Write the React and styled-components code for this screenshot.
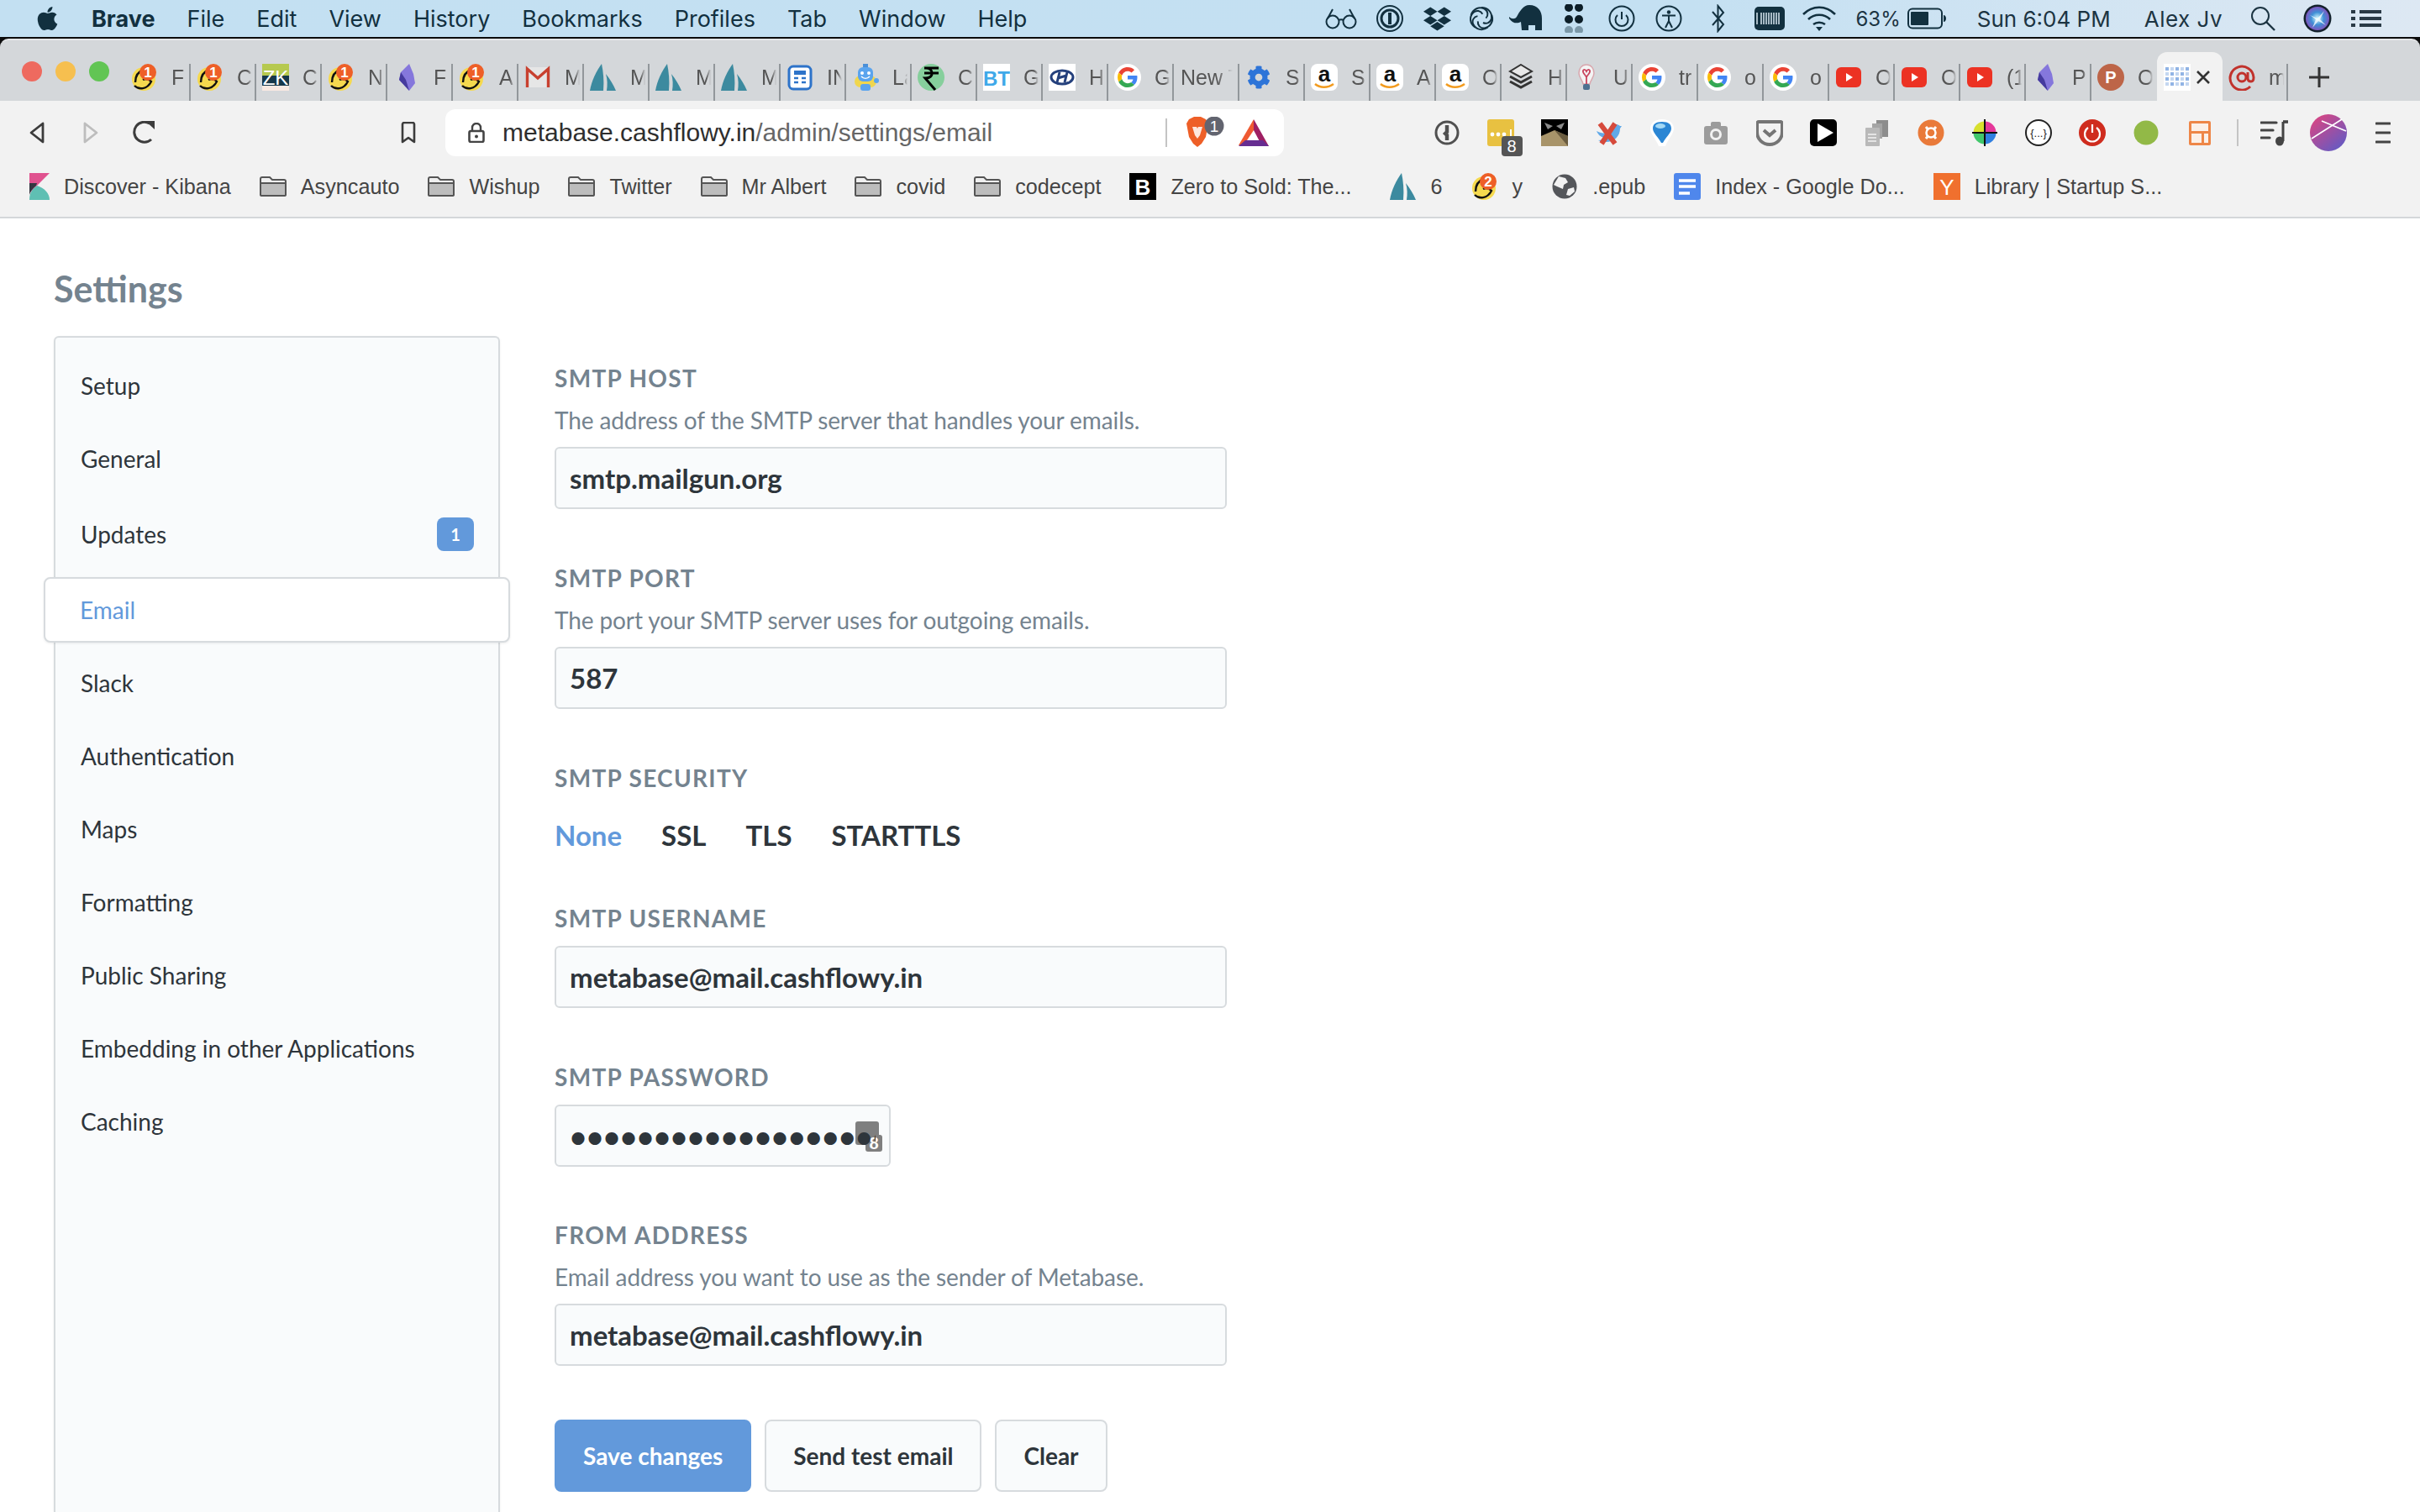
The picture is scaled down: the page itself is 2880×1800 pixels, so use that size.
import React from 'react'
import styled, { createGlobalStyle } from 'styled-components'
import { FaApple, FaDropbox, FaCog } from 'react-icons/fa'

const GlobalStyle = createGlobalStyle`
  * { box-sizing: border-box; }
  html, body { margin: 0; padding: 0; background: #fff; }
  body { font-family: "Lato", "Liberation Sans", sans-serif; }
`

const Screen = styled.div`
  width: 2880px;
  height: 1800px;
  overflow: hidden;
  display: flex;
  flex-direction: column;
  background: #0c0c0c;
`

/* ---- mac menu bar ---- */
const MenuBar = styled.div`
  height: 46px;
  flex: none;
  display: flex;
  align-items: flex-start;
  justify-content: space-between;
  padding: 0 46px 0 42px;
  background: linear-gradient(90deg, #c3e0f2 0%, #c4e0f2 70%, #dde8f3 100%);
  border-bottom: 2px solid #0c0c0c;
  color: #12303f;
  font-family: "Inter", "Liberation Sans", sans-serif;
  font-size: 27px;
`
const MenuGroup = styled.div`
  display: flex;
  align-items: center;
  height: 44px;
  gap: 38px;
`
const AppleSlot = styled.span`
  display: flex;
  width: 29px;
`
const AppName = styled.span`
  font-weight: 700;
`
const MenuItem = styled.span`
  font-weight: 400;
`
const StatusGroup = styled.div`
  display: flex;
  align-items: center;
  height: 44px;
`
const StatusSlot = styled.span`
  width: ${(p) => p.$w}px;
  display: flex;
  justify-content: center;
  align-items: center;
`
const StatusText = styled.span`
  margin-left: ${(p) => p.$ml || 0}px;
  font-size: ${(p) => p.$size || 26}px;
  letter-spacing: ${(p) => p.$ls || 0}px;
  color: #1c3442;
  white-space: nowrap;
`
const StatusIcon = styled.span`
  display: flex;
  margin-left: ${(p) => p.$ml || 0}px;
`

/* ---- tab strip ---- */
const TabBar = styled.div`
  height: 74px;
  flex: none;
  display: flex;
  align-items: flex-start;
  background: #d4d7da;
  border-top: 2px solid #e4e6e8;
  border-radius: 10px 10px 0 0;
`
const Lights = styled.div`
  display: flex;
  gap: 16px;
  margin: 25px 19px 0 26px;
`
const Light = styled.span`
  width: 24px;
  height: 24px;
  border-radius: 50%;
  background: ${(p) => p.$color};
`
const TabStrip = styled.div`
  display: flex;
  align-items: flex-end;
  align-self: flex-end;
`
const Tab = styled.div`
  width: 78px;
  display: flex;
  align-items: center;
  height: ${(p) => (p.$active ? 58 : 44)}px;
  padding: ${(p) => (p.$active ? '2px 0 0 8px' : '0 0 12px 7px')};
  border-right: 2px solid ${(p) => (p.$active || p.$nosep ? 'transparent' : '#92979b')};
  background: ${(p) => (p.$active ? '#f2f2f2' : 'transparent')};
  border-radius: ${(p) => (p.$active ? '12px 12px 0 0' : '0')};
  font-family: "Liberation Sans", sans-serif;
  font-size: 25px;
  color: #555;
`
const TabTitle = styled.span`
  width: ${(p) => (p.$plain ? 62 : 18)}px;
  margin-left: ${(p) => (p.$plain ? 1 : 16)}px;
  overflow: hidden;
  white-space: nowrap;
  -webkit-mask-image: linear-gradient(90deg, #000 70%, transparent 100%);
`
const CloseX = styled.span`
  margin-left: 5px;
  display: flex;
`
const NewTab = styled.span`
  margin-left: 24px;
  height: 44px;
  padding-bottom: 12px;
  display: flex;
  align-items: center;
`

/* ---- toolbar ---- */
const Chrome = styled.div`
  flex: none;
  background: #f2f2f2;
  border-bottom: 2px solid #d4d7da;
  font-family: "Liberation Sans", sans-serif;
`
const Toolbar = styled.div`
  display: flex;
  align-items: center;
  height: 76px;
  padding-left: 12px;
`
const ToolSlot = styled.span`
  width: ${(p) => p.$w || 64}px;
  display: flex;
  justify-content: center;
  position: relative;
`
const AddressBar = styled.div`
  width: 998px;
  height: 56px;
  margin: 0 162px 0 12px;
  padding: 0 18px 0 27px;
  display: flex;
  align-items: center;
  background: #fff;
  border-radius: 12px;
  font-size: 30px;
  color: #666;
`
const UrlText = styled.span`
  margin-left: 21px;
  width: 789px;
  white-space: nowrap;
  b {
    font-weight: 400;
    color: #2e2e2e;
  }
`
const AddressDivider = styled.span`
  width: 2px;
  height: 34px;
  background: #c4c4c4;
  margin-right: 22px;
`
const BraveWrap = styled.span`
  display: flex;
  margin-right: 17px;
`
const ToolDivider = styled.span`
  width: 2px;
  height: 32px;
  background: #c4c4c4;
  margin: 0 12px;
`
const CountBadge = styled.span`
  position: absolute;
  left: 51%;
  top: 20px;
  width: 25px;
  height: 24px;
  border-radius: 4px;
  background: #555;
  color: #fff;
  font-size: 20px;
  display: flex;
  align-items: center;
  justify-content: center;
`

/* ---- bookmarks ---- */
const BookmarkBar = styled.div`
  height: 52px;
  margin-bottom: 10px;
  display: flex;
  align-items: center;
  padding-left: 28px;
  gap: 34px;
  font-size: 25.2px;
  color: #444;
`
const Bookmark = styled.span`
  display: flex;
  align-items: center;
  gap: 17px;
  white-space: nowrap;
  margin-left: ${(p) => p.$ml || 0}px;
`

/* ---- metabase page ---- */
const Page = styled.div`
  flex: 1;
  min-height: 0;
  background: #fff;
  padding: 60px 0 0 64px;
  display: flex;
  flex-direction: column;
  color: #2e353b;
`
const Title = styled.h2`
  margin: 0 0 32px;
  font-size: 43px;
  line-height: 48px;
  font-weight: 700;
  color: #74838f;
`
const Columns = styled.div`
  flex: 1;
  display: flex;
  gap: 65px;
`
const Sidebar = styled.nav`
  width: 531px;
  padding: 13px 0 0;
  background: #f9fbfc;
  border: 2px solid #d7dbde;
  border-bottom: 0;
  border-radius: 6px 6px 0 0;
  box-shadow: 0 1px 3px rgba(0, 0, 0, 0.06);
`
const NavRow = styled.div`
  height: ${(p) => p.$h || 87}px;
  display: flex;
  align-items: center;
`
const NavLink = styled.a`
  flex: 1;
  display: flex;
  align-items: center;
  justify-content: space-between;
  font-size: 28px;
  padding: 0 29px 0 30px;
  color: #2e353b;
  ${(p) =>
    p.$active &&
    `
    height: 78px;
    margin: 0 -14px;
    padding: 0 41px;
    color: #6299db;
    background: #fff;
    border: 2px solid #d7dbde;
    border-radius: 8px;
    box-shadow: 0 1px 3px rgba(0, 0, 0, 0.08);
  `}
`
const NavBadge = styled.span`
  width: 44px;
  height: 40px;
  border-radius: 8px;
  background: #6299db;
  color: #fff;
  font-size: 20px;
  font-weight: 700;
  display: flex;
  align-items: center;
  justify-content: center;
`
const Form = styled.div`
  width: 800px;
  padding-top: 34px;
`
const Field = styled.div`
  margin-bottom: ${(p) => p.$mb || 66}px;
`
const Label = styled.div`
  font-size: 28px;
  line-height: 32px;
  font-weight: 700;
  color: #74838f;
  letter-spacing: 1.3px;
  text-transform: uppercase;
  margin-bottom: ${(p) => p.$mb || 17}px;
`
const Hint = styled.div`
  font-size: 28px;
  line-height: 36px;
  letter-spacing: -0.1px;
  color: #74838f;
  margin: 0 0 14px;
`
const Input = styled.input`
  display: block;
  width: 100%;
  height: 74px;
  padding: 0 16px;
  background: #f9fbfc;
  border: 2px solid #d7dbde;
  border-radius: 6px;
  font-family: "Lato", sans-serif;
  font-size: 33px;
  font-weight: 700;
  color: #2e353b;
  outline: none;
`
const PasswordWrap = styled.div`
  position: relative;
  width: 400px;
  background: #f9fbfc;
  border-radius: 6px;
`
const PasswordInput = styled(Input)`
  position: relative;
  z-index: 1;
  background: transparent;
  font-size: 34.5px;
  padding-left: 16px;
`
const FillIcon = styled.span`
  position: absolute;
  left: 358px;
  top: 20px;
  display: flex;
`
const Options = styled.div`
  display: flex;
  gap: 47px;
  font-size: 33px;
  line-height: 40px;
  font-weight: 700;
`
const Option = styled.span`
  color: ${(p) => (p.$on ? '#6299db' : '#2e353b')};
`
const Buttons = styled.div`
  display: flex;
  gap: 16px;
`
const Button = styled.button`
  height: 86px;
  padding: 0 32px;
  border-radius: 8px;
  border: 2px solid ${(p) => (p.$primary ? '#6299db' : '#d7dbde')};
  background: ${(p) => (p.$primary ? '#6299db' : '#f9fbfc')};
  color: ${(p) => (p.$primary ? '#fff' : '#2e353b')};
  font-family: "Lato", sans-serif;
  font-size: 28px;
  font-weight: 700;
`

/* ---- favicons, all on a 32 box ---- */
const Ico = ({ children, size = 32, w, h }) => (
  <svg width={w || size} height={h || size} viewBox={`0 0 ${w || size} ${h || size}`} style={{ flex: 'none', display: 'block' }}>
    {children}
  </svg>
)
const Pika = ({ n = 1 }) => (
  <Ico>
    <circle cx="15" cy="18" r="14" fill="#f5d94e" />
    <path d="M5 22c0-8 4-13 10-15M4 26c5 5 15 5 20-5-3-3-6-4-10-2" fill="none" stroke="#111" strokeWidth="2.4" />
    <circle cx="20" cy="10" r="10" fill="#ee5f27" />
    <text x="20" y="16" fontSize="17" fontWeight="700" fill="#fff" textAnchor="middle" fontFamily="Liberation Sans">{n}</text>
  </Ico>
)
const Zk = () => (
  <Ico>
    <rect width="32" height="14" fill="#b6c94f" />
    <rect y="14" width="32" height="12" fill="#17384a" />
    <rect y="26" width="32" height="6" fill="#f8e9e2" />
    <text x="16" y="25" fontSize="24" fontWeight="400" fill="#fff" textAnchor="middle" fontFamily="Liberation Sans">ZK</text>
  </Ico>
)
const Crystal = () => (
  <Ico>
    <path d="M19 0 9 10 7 19l12 13 7-9-2-11z" fill="#8577dc" />
    <path d="M9 10 7 19l12 13-4-13z" fill="#453a9e" />
  </Ico>
)
const Gmail = () => (
  <Ico>
    <rect x="2" y="4" width="28" height="24" fill="#e6e6e6" />
    <path d="M3.5 28V6L16 17 28.500 6v22" fill="none" stroke="#c8402f" strokeWidth="3.4" />
  </Ico>
)
const Sail = () => (
  <Ico>
    <path d="M14 0C8 8 2 20 0 32h16C17 20 16 10 14 0z" fill="#3c8a9f" />
    <path d="M19 12c5 6 9 13 12 20H20c1-7 1-13-1-20z" fill="#3c8a9f" />
  </Ico>
)
const Doc = () => (
  <Ico>
    <rect x="3" y="3" width="26" height="27" rx="5" fill="#fff" stroke="#2d73c9" strokeWidth="3" />
    <rect x="9" y="8" width="14" height="5" fill="#2d73c9" />
    <path d="M9 17h5M9 22h5M18 17h5M18 22h5" stroke="#2d73c9" strokeWidth="2.5" />
  </Ico>
)
const Robot = () => (
  <Ico>
    <rect x="3" y="14" width="26" height="14" rx="7" fill="#f0d64e" />
    <rect x="7" y="4" width="18" height="17" rx="6" fill="#5aa4ee" />
    <rect x="13" y="0" width="6" height="4" fill="#4a8fd8" />
    <circle cx="12" cy="11" r="2" fill="#fff" />
    <circle cx="20" cy="11" r="2" fill="#fff" />
    <path d="M11 15c3 3 7 3 10 0" fill="none" stroke="#fff" strokeWidth="1.6" />
    <rect x="10" y="24" width="12" height="8" rx="3" fill="#5aa4ee" />
    <circle cx="29" cy="20" r="3" fill="#5aa4ee" />
  </Ico>
)
const Rupee = () => (
  <Ico>
    <circle cx="16" cy="16" r="16" fill="#86cf9c" />
    <path d="M8 5h17M8 11h17M10 5c9 0 10 12 0 12h-1l12 14" fill="none" stroke="#000" strokeWidth="3" />
  </Ico>
)
const Bt = () => (
  <Ico>
    <rect width="32" height="32" fill="#fff" />
    <text x="16" y="26" fontSize="24" fontWeight="700" fill="#3fa9e9" textAnchor="middle" fontFamily="Liberation Sans">BT</text>
  </Ico>
)
const Hyundai = () => (
  <Ico>
    <rect width="32" height="32" fill="#fff" />
    <ellipse cx="16" cy="16" rx="13" ry="8" fill="none" stroke="#24407c" strokeWidth="3" />
    <path d="M13 10l-3 12M22 10l-3 12M11 17l10-3" stroke="#24407c" strokeWidth="3" />
  </Ico>
)
const GoogleG = () => (
  <Ico>
    <circle cx="16" cy="16" r="16" fill="#fff" />
    <g transform="translate(4 4) scale(.5)">
      <path fill="#EA4335" d="M24 9.5c3.54 0 6.71 1.22 9.21 3.6l6.85-6.85C35.9 2.38 30.47 0 24 0 14.62 0 6.51 5.38 2.56 13.22l7.98 6.19C12.43 13.72 17.74 9.5 24 9.5z" />
      <path fill="#4285F4" d="M46.98 24.55c0-1.57-.15-3.09-.38-4.55H24v9.02h12.94c-.58 2.96-2.26 5.48-4.78 7.18l7.73 6c4.51-4.18 7.09-10.36 7.09-17.65z" />
      <path fill="#FBBC05" d="M10.53 28.59c-.48-1.45-.76-2.99-.76-4.59s.27-3.14.76-4.59l-7.98-6.19C.92 16.46 0 20.12 0 24c0 3.88.92 7.54 2.56 10.78l7.97-6.19z" />
      <path fill="#34A853" d="M24 48c6.48 0 11.93-2.13 15.89-5.81l-7.73-6c-2.15 1.45-4.92 2.3-8.16 2.3-6.26 0-11.57-4.22-13.47-9.91l-7.98 6.19C6.51 42.62 14.62 48 24 48z" />
    </g>
  </Ico>
)
const Gear = () => <FaCog size={28} color="#2d74d8" style={{ margin: '0 2px', flex: 'none' }} />
const Amazon = () => (
  <Ico>
    <rect width="32" height="32" rx="8" fill="#fff" />
    <text x="16" y="21" fontSize="26" fontWeight="700" fill="#111" textAnchor="middle" fontFamily="Liberation Sans">a</text>
    <path d="M5 24c6 5 15 5 22 0" fill="none" stroke="#f29b1f" strokeWidth="2.6" />
  </Ico>
)
const Layers = () => (
  <Ico>
    <path d="M16 1 29 9 16 16 3 9z" fill="#e8e8e8" stroke="#333" strokeWidth="2" />
    <path d="M3 15l13 7 13-7M3 21l13 7 13-7" fill="none" stroke="#333" strokeWidth="3" />
  </Ico>
)
const Bulb = () => (
  <Ico>
    <path d="M16 1c-6 0-9 5-9 10 0 5 4 8 5 13h8c1-5 5-8 5-13 0-5-3-10-9-10z" fill="#f4f4f4" stroke="#d9a7ae" strokeWidth="1.5" />
    <path d="M12 8c1-2 3-1 4 1 1-2 3-3 4-1 1 3-3 5-4 8-1-3-5-5-4-8zM16 16v8" fill="none" stroke="#c9465f" strokeWidth="1.8" />
    <rect x="12" y="24" width="8" height="7" rx="2" fill="#4e7190" />
  </Ico>
)
const Yt = () => (
  <Ico>
    <rect x="1" y="4" width="30" height="24" rx="6" fill="#ec3223" />
    <path d="M13 11l8 5-8 5z" fill="#fff" />
  </Ico>
)
const PCircle = () => (
  <Ico>
    <circle cx="16" cy="16" r="16" fill="#bd6548" />
    <text x="16" y="23" fontSize="20" fontWeight="700" fill="#fff" textAnchor="middle" fontFamily="Liberation Sans">P</text>
  </Ico>
)
const MbDots = () => (
  <Ico>
    <rect width="32" height="32" fill="#fff" />
    {[6, 12, 18, 24].map((y) =>
      [4, 10, 16, 22, 28].map((x) => (
        <rect key={`${x}-${y}`} x={x - 2} y={y - 2} width="4" height="4" fill="#6c9bdc" opacity={(x + y) % 4 ? 0.75 : 0.4} />
      ))
    )}
  </Ico>
)
const AtSign = () => (
  <Ico>
    <circle cx="16" cy="16" r="5" fill="none" stroke="#c1322c" strokeWidth="3" />
    <path d="M26 27A14 14 0 1 1 30 16c0 3-1 5-3 5s-4-1-4-4V10" fill="none" stroke="#c1322c" strokeWidth="3" />
  </Ico>
)

const favicons = {
  pika: <Pika />,
  zk: <Zk />,
  crystal: <Crystal />,
  gmail: <Gmail />,
  sail: <Sail />,
  doc: <Doc />,
  robot: <Robot />,
  rupee: <Rupee />,
  bt: <Bt />,
  hyundai: <Hyundai />,
  google: <GoogleG />,
  gear: <Gear />,
  amazon: <Amazon />,
  layers: <Layers />,
  bulb: <Bulb />,
  yt: <Yt />,
  pcircle: <PCircle />,
  at: <AtSign />,
}

const tabs = [
  ['pika', 'F'], ['pika', 'C'], ['zk', 'C'], ['pika', 'N'], ['crystal', 'F'], ['pika', 'A'], ['gmail', 'M'],
  ['sail', 'M'], ['sail', 'M'], ['sail', 'M'], ['doc', 'IN'], ['robot', 'La'], ['rupee', 'C'], ['bt', 'G'],
  ['hyundai', 'H'], ['google', 'G'], [null, 'New T'], ['gear', 'S'], ['amazon', 'S'], ['amazon', 'A'],
  ['amazon', 'O'], ['layers', 'H'], ['bulb', 'U'], ['google', 'tr'], ['google', 'o'], ['google', 'o'],
  ['yt', 'O'], ['yt', 'O'], ['yt', '(1'], ['crystal', 'P'], ['pcircle', 'O'], ['mb', 'x'], ['at', 'm'],
]

/* ---- toolbar extension icons ---- */
const Brave = () => (
  <svg width="46" height="38" viewBox="0 0 46 38" style={{ display: 'block' }}>
    <path d="M4 3 10 0h8l6 3 3 5-3 16-5 8-5 4-5-4-5-8L1 8z" fill="#ee5f27" />
    <path d="M8 12h5l1 2 1-2h5l-3 10-3 4-3-4z" fill="#fff" opacity=".85" />
    <circle cx="34" cy="11" r="11.5" fill="#62646f" />
    <text x="34" y="18" fontSize="19" fill="#fff" textAnchor="middle" fontFamily="Liberation Sans">1</text>
  </svg>
)
const Bat = () => (
  <Ico w={36} h={32}>
    <path d="M18 0 0 31l6-0 12-18z" fill="#ef5a32" />
    <path d="M18 0l18 32H28L18 13z" fill="#9e1f63" />
    <path d="M0 32h36l-7-7H8z" fill="#662d91" />
  </Ico>
)
const OnePass = () => (
  <Ico size={30}>
    <circle cx="15" cy="15" r="13" fill="none" stroke="#505050" strokeWidth="3" />
    <path d="M15 6v8l-2 2 2 2v6" fill="none" stroke="#505050" strokeWidth="4.4" />
  </Ico>
)
const LastPass = () => (
  <Ico>
    <rect width="32" height="32" rx="3" fill="#e8c141" />
    <circle cx="6" cy="18" r="2.4" fill="#fff" />
    <circle cx="13" cy="18" r="2.4" fill="#fff" />
    <circle cx="20" cy="18" r="2.4" fill="#fff" />
    <rect x="27" y="12" width="2" height="12" fill="#fff" />
  </Ico>
)
const Owl = () => (
  <Ico>
    <rect width="32" height="32" fill="#000" />
    <path d="M4 4l10 4-6 4zM28 4 18 8l6 4z" fill="#8b8b8b" />
    <path d="M0 32V20l16-7 16 7v12z" fill="#a8946a" />
    <path d="M16 13l16 7v12z" fill="#6a5c40" />
  </Ico>
)
const TwitterX = () => (
  <Ico>
    <path d="M2 14c6 3 10 3 14 2 0-8 8-13 14-8l2 0-2 3c0 12-12 20-26 14 4 0 6-1 8-3-6-1-8-4-10-8z" fill="#61a9e8" />
    <path d="M6 5l18 24M24 5 8 29" stroke="#d64a3c" strokeWidth="6" />
  </Ico>
)
const Balloon = () => (
  <Ico>
    <path d="M16 0c9 0 14 5 14 11 0 6-7 13-10 21h-8C9 24 2 17 2 11 2 5 7 0 16 0z" fill="#fff" />
    <path d="M16 3c8 0 11 3 11 8 0 5-7 11-10 17h-2C12 22 5 16 5 11c0-5 3-8 11-8z" fill="#2b86d4" />
    <ellipse cx="14" cy="8" rx="6" ry="3" fill="#a3d8f5" />
  </Ico>
)
const Camera = () => (
  <Ico>
    <rect x="2" y="8" width="28" height="22" rx="3" fill="#9c9c9c" />
    <rect x="10" y="3" width="12" height="7" rx="2" fill="#9c9c9c" />
    <circle cx="16" cy="18" r="7" fill="#f2f2f2" />
    <circle cx="16" cy="18" r="4" fill="#9c9c9c" />
  </Ico>
)
const Pocket = () => (
  <Ico>
    <path d="M3 3h26c1 0 2 1 2 2v10c0 9-7 15-15 15S1 24 1 15V5c0-1 1-2 2-2z" fill="none" stroke="#757575" strokeWidth="4" />
    <path d="M9 13l7 6 7-6" fill="none" stroke="#757575" strokeWidth="4" />
  </Ico>
)
const PlayBlack = () => (
  <Ico>
    <rect width="32" height="32" rx="5" fill="#000" />
    <path d="M9 5l19 11L9 27z" fill="#fff" />
  </Ico>
)
const Docs = () => (
  <Ico>
    <rect x="15" y="1" width="14" height="20" fill="#8d8d8d" />
    <rect x="10" y="5" width="12" height="18" fill="#a5a5a5" />
    <rect x="2" y="10" width="17" height="22" rx="1" fill="#b9b9b9" />
    <path d="M5 18h10M5 22h10M5 26h10" stroke="#f2f2f2" strokeWidth="1.5" />
  </Ico>
)
const Ubuntuish = () => (
  <Ico>
    <circle cx="16" cy="16" r="15.500" fill="#e97a3a" />
    <path d="M10 9l12 14M22 9 10 23" stroke="#fff" strokeWidth="3" />
    <circle cx="16" cy="16" r="5.500" fill="#e97a3a" stroke="#fff" strokeWidth="2.500" />
  </Ico>
)
const ColorWheel = () => (
  <Ico>
    <defs>
      <clipPath id="wheelClip"><circle cx="16" cy="16" r="13.5" /></clipPath>
    </defs>
    <g clipPath="url(#wheelClip)">
      <rect x="2" y="2" width="14" height="14" fill="#d8e02e" />
      <rect x="16" y="2" width="14" height="14" fill="#e5389a" />
      <rect x="2" y="16" width="14" height="14" fill="#41c76b" />
      <rect x="16" y="16" width="14" height="14" fill="#2f7fe0" />
    </g>
    <path d="M16 0v32M1 16h30" stroke="#111" strokeWidth="2" />
  </Ico>
)
const JsonIcon = () => (
  <Ico>
    <circle cx="16" cy="16" r="15" fill="#fff" stroke="#222" strokeWidth="2" />
    <text x="16" y="21" fontSize="13" fill="#222" textAnchor="middle" fontFamily="Liberation Sans">{'{...}'}</text>
  </Ico>
)
const PowerRed = () => (
  <Ico>
    <circle cx="16" cy="16" r="16" fill="#cf2c1e" />
    <path d="M11 10a9 9 0 1 0 10 0" fill="none" stroke="#fff" strokeWidth="2.2" />
    <path d="M16 6v10" stroke="#fff" strokeWidth="2.2" />
  </Ico>
)
const GreenDot = () => (
  <Ico>
    <circle cx="16" cy="16" r="14.5" fill="#92b947" />
  </Ico>
)
const LayoutIco = () => (
  <Ico>
    <rect x="3" y="2" width="26" height="29" rx="2" fill="#ee8647" />
    <rect x="6" y="5" width="20" height="9" fill="#fbf0e8" />
    <rect x="6" y="17" width="12" height="11" fill="#fbf0e8" />
    <rect x="21" y="17" width="5" height="11" fill="#fbf0e8" />
  </Ico>
)
const Music = () => (
  <Ico w={34} h={32}>
    <path d="M1 4h18M1 13h14M1 22h10" stroke="#444" strokeWidth="3.2" strokeLinecap="round" />
    <path d="M27 3v23" stroke="#444" strokeWidth="3" />
    <path d="M27 3h6" stroke="#444" strokeWidth="3.6" />
    <ellipse cx="23" cy="26" rx="5" ry="5.5" fill="#444" />
  </Ico>
)
const Avatar = () => (
  <Ico size={44}>
    <defs>
      <linearGradient id="avatarFill" x1="0.1" y1="0" x2="0.9" y2="1">
        <stop offset="0" stopColor="#e0447f" />
        <stop offset="1" stopColor="#5b5cc8" />
      </linearGradient>
    </defs>
    <circle cx="22" cy="22" r="22" fill="url(#avatarFill)" />
    <path d="M2 29 38 6M14 8l29 12" stroke="#fff" strokeWidth="1.6" />
  </Ico>
)
const Burger = () => (
  <Ico w={18} h={26}>
    <path d="M1 2h16M1 13h16M1 24h16" stroke="#444" strokeWidth="3.2" strokeLinecap="round" />
  </Ico>
)

const exts = [
  <OnePass />, <LastPass />, <Owl />, <TwitterX />, <Balloon />, <Camera />, <Pocket />, <PlayBlack />, <Docs />,
  <Ubuntuish />, <ColorWheel />, <JsonIcon />, <PowerRed />, <GreenDot />, <LayoutIco />,
]

/* ---- mac status icons ---- */
const ink = '#12303f'
const Glasses = () => (
  <Ico w={38} h={26}>
    <circle cx="9" cy="17" r="7.5" fill="none" stroke={ink} strokeWidth="2" />
    <circle cx="29" cy="17" r="7.5" fill="none" stroke={ink} strokeWidth="2" />
    <path d="M16 15c2-1 4-1 6 0M3 13 9 2M35 13 29 2" fill="none" stroke={ink} strokeWidth="2" />
  </Ico>
)
const OnePassStatus = () => (
  <Ico size={32}>
    <circle cx="16" cy="16" r="15" fill="none" stroke={ink} strokeWidth="2" />
    <circle cx="16" cy="16" r="10" fill="none" stroke={ink} strokeWidth="3" />
    <path d="M16 9v14" stroke={ink} strokeWidth="4" />
  </Ico>
)
const Swirl = () => (
  <Ico w={32} h={30}>
    <g fill="none" stroke={ink} strokeWidth="2">
      {[0, 72, 144, 216, 288].map((a) => (
        <path key={a} d="M16 2C24 2 29 8 28 15 27 20 22 22 18 20" transform={`rotate(${a} 16 15)`} />
      ))}
    </g>
  </Ico>
)
const Elephant = () => (
  <Ico w={40} h={32}>
    <path d="M0 14c3 3 7 3 9 0 3-6 8-14 15-14 10 0 15 7 15 16v14h-8v-6h-8v6h-8l-1-10c-4 2-10 3-15-6z" fill={ink} />
  </Ico>
)
const DotGrid = () => (
  <Ico w={22} h={34}>
    {[5, 19, 32].map((y, i) =>
      [5, 17].map((x) => <circle key={`${x}-${y}`} cx={x} cy={y - 1} r="5" fill={i === 2 ? '#7b98a8' : '#0c1e28'} />)
    )}
  </Ico>
)
const PowerStatus = () => (
  <Ico size={32}>
    <circle cx="16" cy="16" r="14.5" fill="none" stroke={ink} strokeWidth="2" />
    <path d="M11 12a7.5 7.5 0 1 0 10 0M16 8v9" fill="none" stroke={ink} strokeWidth="2" />
  </Ico>
)
const Access = () => (
  <Ico size={32}>
    <circle cx="16" cy="16" r="14.5" fill="none" stroke={ink} strokeWidth="2" />
    <circle cx="16" cy="8.5" r="2.2" fill={ink} />
    <path d="M8 12.5h16M16 12.5v7M16 19l-4 8M16 19l4 8" fill="none" stroke={ink} strokeWidth="2" />
  </Ico>
)
const Bluetooth = () => (
  <Ico w={18} h={34}>
    <path d="M2 9 15 24 8.5 32V2L15 10 2 25" fill="none" stroke={ink} strokeWidth="2" />
  </Ico>
)
const Barcode = () => (
  <Ico w={36} h={28}>
    <rect width="36" height="28" rx="5" fill={ink} />
    <path d="M3 7v14M8 7v14M11 7v14M14 7v14M17 7v14M20 7v14M23 7v14M26 7v14M29 7v14" stroke="#d9e8f2" strokeWidth="1.5" />
  </Ico>
)
const Wifi = () => (
  <Ico w={42} h={30}>
    <path d="M2 10c11-11 27-11 38 0M8 16c7-7 19-7 26 0M14 22c4-3 10-3 14 0" fill="none" stroke={ink} strokeWidth="2.6" />
    <path d="M17 25h8l-4 5z" fill={ink} />
  </Ico>
)
const Battery = () => (
  <Ico w={46} h={26}>
    <rect x="1" y="1.5" width="40" height="23" rx="5" fill="none" stroke={ink} strokeWidth="2" />
    <rect x="4" y="5" width="21" height="16" rx="1" fill={ink} />
    <path d="M43 9c2 0 3 2 3 4s-1 4-3 4z" fill={ink} />
  </Ico>
)
const SearchGlass = () => (
  <Ico size={30}>
    <circle cx="12" cy="12" r="10" fill="none" stroke="#1c3442" strokeWidth="2" />
    <path d="M19 19l10 10" stroke="#1c3442" strokeWidth="2.4" />
  </Ico>
)
const Siri = () => (
  <Ico size={34}>
    <defs>
      <radialGradient id="siriFill" cx="0.5" cy="0.5" r="0.6">
        <stop offset="0" stopColor="#dff" />
        <stop offset=".45" stopColor="#3f8fd6" />
        <stop offset="1" stopColor="#9a3fb8" />
      </radialGradient>
    </defs>
    <circle cx="17" cy="17" r="16.5" fill="#12202c" />
    <circle cx="17" cy="17" r="14" fill="url(#siriFill)" />
    <path d="M8 13l9 4 8-9-5 10 7 7-9-5-7 8 4-10z" fill="#fff" opacity=".75" />
  </Ico>
)
const ListIcon = () => (
  <Ico w={36} h={22}>
    <path d="M0 3h5M10 3h26M0 11h5M10 11h26M0 19h5M10 19h26" stroke="#2a3a46" strokeWidth="4" />
  </Ico>
)
const BookmarkIco = () => (
  <svg width="18" height="26" viewBox="0 0 18 26" style={{ display: 'block' }}>
    <path d="M2 3c0-1 1-2 2-2h10c1 0 2 1 2 2v21l-7-5-7 5z" fill="none" stroke="#3c3c3c" strokeWidth="2.6" strokeLinejoin="round" />
  </svg>
)
const Arrow = ({ right, color }) => (
  <svg width="20" height="26" viewBox="0 0 20 26" style={{ display: 'block', transform: right ? 'scaleX(-1)' : 'none' }}>
    <path d="M17 2 3 13l14 11z" fill="none" stroke={color} strokeWidth="2.8" strokeLinejoin="round" />
  </svg>
)
const Reload = () => (
  <svg width="28" height="28" viewBox="0 0 28 28" style={{ display: 'block' }}>
    <path d="M22 22A12 12 0 1 1 20 3" fill="none" stroke="#3c3c3c" strokeWidth="3" />
    <path d="M15 0h11v10z" fill="#3c3c3c" />
  </svg>
)
const Lock = () => (
  <svg width="20" height="24" viewBox="0 0 20 24" style={{ display: 'block', flex: 'none' }}>
    <path d="M5 10V6a5 5 0 0 1 10 0v4" fill="none" stroke="#444" strokeWidth="2.4" />
    <rect x="1.5" y="10" width="17" height="13" rx="2" fill="none" stroke="#444" strokeWidth="2.6" />
    <circle cx="10" cy="16.5" r="2" fill="#444" />
  </svg>
)
const PlusIcon = () => (
  <Ico size={26}>
    <path d="M13 1v24M1 13h24" stroke="#333" strokeWidth="3" />
  </Ico>
)
const CloseIcon = () => (
  <Ico size={20}>
    <path d="M3 3l14 14M17 3 3 17" stroke="#333" strokeWidth="2.6" />
  </Ico>
)

/* ---- bookmark icons ---- */
const Folder = () => (
  <Ico w={32} h={24}>
    <path d="M1 3c0-1 1-2 2-2h9l3 3h14c1 0 2 1 2 2v16c0 1-1 1-2 1H3c-1 0-2 0-2-1z" fill="#f0f0f0" stroke="#555" strokeWidth="2" />
    <rect x="2" y="9" width="28" height="13" fill="#bdbdbd" />
    <path d="M1 8h30" stroke="#555" strokeWidth="2" />
  </Ico>
)
const Kibana = () => (
  <Ico w={24} h={32}>
    <path d="M0 0h24L0 24z" fill="#e0528f" />
    <path d="M0 32c0-8 3-13 9-17 9 3 15 9 15 17z" fill="#5fbfb3" />
    <path d="M0 12h9l-1 3C4 18 1 22 0 26z" fill="#343741" />
  </Ico>
)
const BBox = () => (
  <Ico>
    <rect width="32" height="32" fill="#000" />
    <text x="16" y="26" fontSize="26" fontWeight="700" fill="#fff" textAnchor="middle" fontFamily="Liberation Sans">B</text>
  </Ico>
)
const Globe = () => (
  <Ico>
    <circle cx="16" cy="16" r="14.5" fill="#54565a" />
    <path d="M9 4l8 2 3 5-5 3-1 5-7-3-4-2zM20 19l7-2 1 5-6 5-4-1z" fill="#f2f2f2" />
  </Ico>
)
const GDocs = () => (
  <Ico>
    <rect width="32" height="32" rx="3" fill="#4f87ec" />
    <path d="M6 9h20M6 16h20M6 24h13" stroke="#fff" strokeWidth="3.4" />
  </Ico>
)
const YBox = () => (
  <Ico>
    <rect width="32" height="32" fill="#f0702e" />
    <text x="16" y="26" fontSize="26" fill="#fff" textAnchor="middle" fontFamily="Liberation Sans">Y</text>
  </Ico>
)

const bookmarks = [
  { icon: <Kibana />, text: 'Discover - Kibana', ml: 7 },
  { icon: <Folder />, text: 'Asyncauto' },
  { icon: <Folder />, text: 'Wishup' },
  { icon: <Folder />, text: 'Twitter' },
  { icon: <Folder />, text: 'Mr Albert' },
  { icon: <Folder />, text: 'covid' },
  { icon: <Folder />, text: 'codecept' },
  { icon: <BBox />, text: 'Zero to Sold: The...' },
  { icon: <Sail />, text: '6', ml: 11 },
  { icon: <Pika n={2} />, text: 'y' },
  { icon: <Globe />, text: '.epub' },
  { icon: <GDocs />, text: 'Index - Google Do...' },
  { icon: <YBox />, text: 'Library | Startup S...' },
]

const navItems = ['Setup', 'General', 'Updates', 'Email', 'Slack', 'Authentication', 'Maps', 'Formatting', 'Public Sharing', 'Embedding in other Applications', 'Caching']

const App = () => {
  return (
    <Screen>
      <GlobalStyle />
      <MenuBar>
        <MenuGroup>
          <AppleSlot><FaApple size={32} color={ink} /></AppleSlot>
          <AppName>Brave</AppName>
          {['File', 'Edit', 'View', 'History', 'Bookmarks', 'Profiles', 'Tab', 'Window', 'Help'].map((m) => (
            <MenuItem key={m}>{m}</MenuItem>
          ))}
        </MenuGroup>
        <StatusGroup>
          <StatusSlot $w={58}><Glasses /></StatusSlot>
          <StatusSlot $w={58}><OnePassStatus /></StatusSlot>
          <StatusSlot $w={54}><FaDropbox size={33} color={ink} /></StatusSlot>
          <StatusSlot $w={51}><Swirl /></StatusSlot>
          <StatusSlot $w={56}><Elephant /></StatusSlot>
          <StatusSlot $w={58}><DotGrid /></StatusSlot>
          <StatusSlot $w={55}><PowerStatus /></StatusSlot>
          <StatusSlot $w={58}><Access /></StatusSlot>
          <StatusSlot $w={60}><Bluetooth /></StatusSlot>
          <StatusSlot $w={61}><Barcode /></StatusSlot>
          <StatusSlot $w={58}><Wifi /></StatusSlot>
          <StatusText $ml={14} $size={24}>63%</StatusText>
          <StatusIcon $ml={8}><Battery /></StatusIcon>
          <StatusText $ml={37}>Sun 6:04 PM</StatusText>
          <StatusText $ml={40} $ls={0.5}>Alex Jv</StatusText>
          <StatusIcon $ml={33}><SearchGlass /></StatusIcon>
          <StatusIcon $ml={33}><Siri /></StatusIcon>
          <StatusIcon $ml={23}><ListIcon /></StatusIcon>
        </StatusGroup>
      </MenuBar>

      <TabBar>
        <Lights>
          <Light $color="#ee6a5f" />
          <Light $color="#f6bf4f" />
          <Light $color="#62c554" />
        </Lights>
        <TabStrip>
          {tabs.map(([icon, title], i) => {
            if (icon === 'mb') {
              return (
                <Tab key={i} $active>
                  <MbDots />
                  <CloseX><CloseIcon /></CloseX>
                </Tab>
              )
            }
            return (
              <Tab key={i} $nosep={tabs[i + 1] && tabs[i + 1][0] === 'mb'}>
                {icon && favicons[icon]}
                <TabTitle $plain={!icon}>{title}</TabTitle>
              </Tab>
            )
          })}
          <NewTab><PlusIcon /></NewTab>
        </TabStrip>
      </TabBar>

      <Chrome>
        <Toolbar>
          <ToolSlot><Arrow color="#3c3c3c" /></ToolSlot>
          <ToolSlot><Arrow right color="#bdbdbd" /></ToolSlot>
          <ToolSlot><Reload /></ToolSlot>
          <ToolSlot $w={250} />
          <ToolSlot><BookmarkIco /></ToolSlot>
          <AddressBar>
            <Lock />
            <UrlText><b>metabase.cashflowy.in</b>/admin/settings/email</UrlText>
            <AddressDivider />
            <BraveWrap><Brave /></BraveWrap>
            <Bat />
          </AddressBar>
          {exts.map((ext, i) => (
            <ToolSlot key={i}>
              {ext}
              {i === 1 && <CountBadge>8</CountBadge>}
            </ToolSlot>
          ))}
          <ToolDivider />
          <ToolSlot $w={62}><Music /></ToolSlot>
          <ToolSlot $w={66}><Avatar /></ToolSlot>
          <ToolSlot $w={64}><Burger /></ToolSlot>
        </Toolbar>
        <BookmarkBar>
          {bookmarks.map((b) => (
            <Bookmark key={b.text} $ml={b.ml}>{b.icon}{b.text}</Bookmark>
          ))}
        </BookmarkBar>
      </Chrome>

      <Page>
        <Title>Settings</Title>
        <Columns>
          <Sidebar>
            {navItems.map((item) => (
              <NavRow key={item} $h={item === 'Updates' ? 93 : 87}>
                <NavLink $active={item === 'Email'}>
                  {item}
                  {item === 'Updates' && <NavBadge>1</NavBadge>}
                </NavLink>
              </NavRow>
            ))}
          </Sidebar>
          <Form>
            <Field>
              <Label $mb={16}>SMTP Host</Label>
              <Hint>The address of the SMTP server that handles your emails.</Hint>
              <Input readOnly value="smtp.mailgun.org" />
            </Field>
            <Field>
              <Label $mb={16}>SMTP Port</Label>
              <Hint>The port your SMTP server uses for outgoing emails.</Hint>
              <Input readOnly value="587" />
            </Field>
            <Field $mb={63}>
              <Label $mb={32}>SMTP Security</Label>
              <Options>
                <Option $on>None</Option>
                <Option>SSL</Option>
                <Option>TLS</Option>
                <Option>STARTTLS</Option>
              </Options>
            </Field>
            <Field>
              <Label>SMTP Username</Label>
              <Input readOnly value="metabase@mail.cashflowy.in" />
            </Field>
            <Field $mb={65}>
              <Label>SMTP Password</Label>
              <PasswordWrap>
                <PasswordInput readOnly type="password" value="aaaaaaaaaaaaaaaaaaa" />
                <FillIcon>
                  <svg width="34" height="38" viewBox="0 0 34 38">
                    <rect x="0" y="0" width="28" height="28" rx="3" fill="#7f7f7f" />
                    <rect x="12" y="16" width="20" height="20" rx="3" fill="#7f7f7f" />
                    <text x="22" y="33" fontSize="20" fontWeight="700" fill="#fff" textAnchor="middle" fontFamily="Liberation Sans">8</text>
                  </svg>
                </FillIcon>
              </PasswordWrap>
            </Field>
            <Field $mb={64}>
              <Label $mb={16}>From Address</Label>
              <Hint>Email address you want to use as the sender of Metabase.</Hint>
              <Input readOnly value="metabase@mail.cashflowy.in" />
            </Field>
            <Buttons>
              <Button $primary>Save changes</Button>
              <Button>Send test email</Button>
              <Button>Clear</Button>
            </Buttons>
          </Form>
        </Columns>
      </Page>
    </Screen>
  )
}

export default App
